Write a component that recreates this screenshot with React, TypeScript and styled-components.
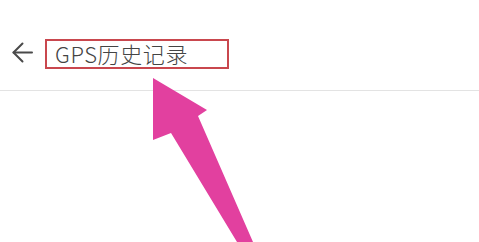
import React from "react";
import styled, { createGlobalStyle } from "styled-components";

const Global = createGlobalStyle`
  html, body { margin: 0; padding: 0; background: #ffffff; }
  body { font-family: "Noto Sans CJK SC", "Noto Sans", sans-serif; }
`;

const Page = styled.div`
  position: relative;
  width: 479px;
  height: 242px;
  overflow: hidden;
  background: #ffffff;
`;

const Header = styled.header`
  box-sizing: border-box;
  height: 91px;
  display: flex;
  align-items: flex-start;
  padding: 39px 0 0 11px;
  border-bottom: 1px solid #e3e3e3;
`;

const BackButton = styled.button`
  width: 23px;
  height: 23px;
  margin-top: 2px;
  padding: 0;
  border: none;
  background: none;
  color: #4a4a4a;
  display: flex;
  align-items: center;
  justify-content: center;
`;

const TitleBox = styled.div`
  box-sizing: border-box;
  margin-left: 11px;
  width: 184px;
  height: 30px;
  border: 2px solid #c9474e;
  padding: 0 0 2px 8px;
  display: flex;
  align-items: center;
  font-size: 22px;
  line-height: 24px;
  font-weight: 300;
  color: #444444;
  letter-spacing: 0.6px;
  white-space: nowrap;
`;

const Pointer = styled.svg`
  position: absolute;
  left: 0;
  top: 0;
  pointer-events: none;
`;

export default function App() {
  return (
    <>
      <Global />
      <Page>
        <Header>
          <BackButton aria-label="back">
            <svg width="23" height="23" viewBox="0 0 23 23" fill="none" stroke="currentColor" strokeWidth="2" strokeLinecap="round" strokeLinejoin="round">
              <path d="M21 11.5H2.5" />
              <path d="M11.5 2.5L2.5 11.5L11.5 20.5" />
            </svg>
          </BackButton>
          <TitleBox>GPS历史记录</TitleBox>
        </Header>
        <Pointer width="479" height="242" viewBox="0 0 479 242">
          <polygon
            points="153,78 207,110 198,116 253,242 237,242 171,133 153,140"
            fill="#e2409f"
          />
        </Pointer>
      </Page>
    </>
  );
}
